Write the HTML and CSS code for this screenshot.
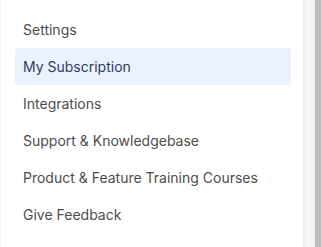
FILE: index.html
```html
<!DOCTYPE html>
<html lang="en">
<head>
    <meta charset="UTF-8">
    <meta name="viewport" content="width=device-width, initial-scale=1.0">
    <title>Account menu</title>
    <link rel="stylesheet" href="styles.css">
</head>
<body>

    <div class="frame">
        <div class="menu">
            <ul class="menu-list">
                <li class="menu-item faded">Referrals &amp; Rewards <span class="dot"></span></li>
                <li class="menu-item">Settings</li>
                <li class="menu-item active">My Subscription</li>
                <li class="menu-item">Integrations</li>
                <li class="menu-item">Support &amp; Knowledgebase</li>
                <li class="menu-item">Product &amp; Feature Training Courses</li>
                <li class="menu-item">Give Feedback</li>
            </ul>
        </div>

        <div class="scrollbar">
            <div class="track"></div>
            <div class="thumb"></div>
        </div>
    </div>

</body>
</html>
```

FILE: styles.css
```css
* {
    margin: 0;
    padding: 0;
    box-sizing: border-box;
}

body {
    font-family: Inter, "Noto Sans", sans-serif;
    background-color: #ffffff;
    overflow: hidden;
}

.frame {
    display: flex;
    height: 247px;
    overflow: hidden;
}

.menu {
    position: relative;
    width: 303px;
    background-color: #ffffff;
    border-left: 1px solid #f3f3f3;
    overflow: hidden;
}

/* fade the item scrolled under the top edge */
.menu::before {
    content: "";
    position: absolute;
    top: 0;
    left: 0;
    right: 0;
    height: 8px;
    background: linear-gradient(rgba(255, 255, 255, 0.85), rgba(255, 255, 255, 0.4));
    z-index: 1;
}

.menu-list {
    list-style: none;
    margin-top: -26px;
    padding: 0 12px 0 14px;
}

.menu-item {
    display: flex;
    align-items: center;
    height: 37px;
    padding-left: 8px;
    font-size: 14px;
    color: #4d4d4d;
    border-radius: 2px;
}

.menu-item.active {
    background-color: #eaf2fd;
    color: #2e3d58;
}

.menu-item.faded {
    color: #c9c9c9;
}

.dot {
    width: 8px;
    height: 8px;
    margin-left: auto;
    margin-right: 18px;
    border-radius: 50%;
    background-color: #f6b3b8;
}

.scrollbar {
    display: flex;
    flex: 1;
}

.track {
    width: 12px;
    background: linear-gradient(to right, #f0f0f0, #f7f7f7 40%, #f3f3f3);
    border-left: 1px solid #ececec;
}

.thumb {
    flex: 1;
    background-color: #bdbdbd;
}
```
